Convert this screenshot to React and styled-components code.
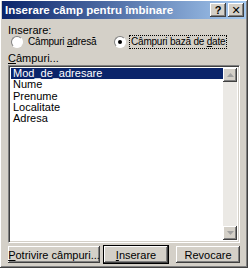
import React from "react";
import styled, { createGlobalStyle } from "styled-components";

const GlobalStyle = createGlobalStyle`
  * {
    margin: 0;
    padding: 0;
    box-sizing: border-box;
  }

  html, body {
    width: 248px;
    height: 268px;
    overflow: hidden;
    background: #d4d0c8;
  }
`;

const Dialog = styled.div`
  width: 248px;
  height: 268px;
  display: flex;
  flex-direction: column;
  background: #d4d0c8;
  box-shadow: inset -1px -1px 0 #404040, inset 1px 1px 0 #fff,
    inset -2px -2px 0 #808080;
  padding: 1px 2px 3px 2px;
  font-family: "Liberation Sans", "DejaVu Sans", sans-serif;
  font-size: 11px;
  color: #000;
`;

const TitleBar = styled.div`
  height: 18px;
  display: flex;
  align-items: center;
  justify-content: space-between;
  padding: 0 2px 0 3px;
  background: linear-gradient(90deg, #0a246a, #a6caf0);
`;

const Title = styled.span`
  color: #fff;
  font-weight: bold;
  font-size: 11.5px;
`;

const Caps = styled.div`
  display: flex;
  gap: 2px;
`;

const CapButton = styled.div`
  width: 16px;
  height: 14px;
  background: #d4d0c8;
  box-shadow: inset -1px -1px 0 #404040, inset 1px 1px 0 #fff,
    inset -2px -2px 0 #808080;
  display: flex;
  align-items: center;
  justify-content: center;
  font-weight: bold;
  font-size: 11px;
  line-height: 1;
`;

const Body = styled.div`
  flex: 1;
  display: flex;
  flex-direction: column;
  padding: 5px 6px 2px 6px;
`;

const Label = styled.div`
  height: 12px;
  line-height: 12px;
  margin-bottom: ${(p) => p.$mb || 0}px;
`;

const RadioRow = styled.div`
  display: flex;
  align-items: center;
  padding-left: 3px;
  height: 12px;
  margin-bottom: 4px;
  white-space: nowrap;
  font-size: 10px;
  letter-spacing: -0.2px;
`;

const RadioItem = styled.label`
  display: flex;
  align-items: center;
  gap: 4px;
  width: ${(p) => (p.$w ? `${p.$w}px` : "auto")};
`;

const RadioDot = styled.span`
  width: 12px;
  height: 12px;
  border-radius: 50%;
  background: #fff;
  border: 1px solid;
  border-color: #808080 #fff #fff #808080;
  display: flex;
  align-items: center;
  justify-content: center;

  &::after {
    content: "";
    width: 4px;
    height: 4px;
    border-radius: 50%;
    background: ${(p) => (p.$on ? "#000" : "transparent")};
  }
`;

const RadioText = styled.span`
  padding: 0 1px;
  line-height: 12px;
  outline: ${(p) => (p.$focus ? "1px dotted #000" : "none")};
`;

const ListBox = styled.div`
  flex: 1;
  display: flex;
  margin-top: 1px;
  background: #fff;
  border: 1px solid;
  border-color: #808080 #fff #fff #808080;
  box-shadow: inset 1px 1px 0 #404040, inset -1px -1px 0 #d4d0c8;
  padding: 2px;
`;

const Items = styled.div`
  flex: 1;
  display: flex;
  flex-direction: column;
`;

const Item = styled.div`
  height: 11.25px;
  line-height: 11px;
  padding-left: 2px;
  background: ${(p) => (p.$sel ? "#0a246a" : "transparent")};
  color: ${(p) => (p.$sel ? "#fff" : "#000")};
`;

const ScrollBar = styled.div`
  width: 14px;
  display: flex;
  flex-direction: column;
  justify-content: space-between;
  background: #ebe9e5;
`;

const Arrow = styled.div`
  width: 14px;
  height: 14px;
  background: #d4d0c8;
  box-shadow: inset -1px -1px 0 #404040, inset 1px 1px 0 #fff,
    inset -2px -2px 0 #808080;
  display: flex;
  align-items: center;
  justify-content: center;
`;

const Buttons = styled.div`
  display: flex;
  margin-top: 3px;
  height: 17px;
  gap: 4px;
  white-space: nowrap;
`;

const Button = styled.div`
  width: ${(p) => p.$w}px;
  margin-left: ${(p) => p.$ml || 0}px;
  display: flex;
  align-items: center;
  justify-content: center;
  background: #d4d0c8;
  outline: ${(p) => (p.$def ? "1px solid #000" : "none")};
  box-shadow: inset -1px -1px 0 #404040, inset 1px 1px 0 #fff,
    inset -2px -2px 0 #808080;
`;

const U = styled.u`
  text-decoration: underline;
`;

const Tri = ({ up }) => (
  <svg width="7" height="4" viewBox="0 0 7 4">
    <path d={up ? "M3.5 0 L7 4 L0 4 Z" : "M0 0 L7 0 L3.5 4 Z"} fill="#a0a0a0" />
  </svg>
);

const fields = ["Mod_de_adresare", "Nume", "Prenume", "Localitate", "Adresa"];

const App = () => (
  <>
    <GlobalStyle />
    <Dialog>
      <TitleBar>
        <Title>Inserare câmp pentru îmbinare</Title>
        <Caps>
          <CapButton>?</CapButton>
          <CapButton>✕</CapButton>
        </Caps>
      </TitleBar>
      <Body>
        <Label>Inserare:</Label>
        <RadioRow>
          <RadioItem $w={103}>
            <RadioDot />
            <RadioText>
              Câmpuri <U>a</U>dresă
            </RadioText>
          </RadioItem>
          <RadioItem>
            <RadioDot $on />
            <RadioText $focus>
              Câmpuri bază de <U>d</U>ate
            </RadioText>
          </RadioItem>
        </RadioRow>
        <Label>
          <U>C</U>âmpuri...
        </Label>
        <ListBox>
          <Items>
            {fields.map((f, i) => (
              <Item key={f} $sel={i === 0}>
                {f}
              </Item>
            ))}
          </Items>
          <ScrollBar>
            <Arrow>
              <Tri up />
            </Arrow>
            <Arrow>
              <Tri />
            </Arrow>
          </ScrollBar>
        </ListBox>
        <Buttons>
          <Button $w={92}>
            <span>
              <U>P</U>otrivire câmpuri...
            </span>
          </Button>
          <Button $w={64} $def>
            <span>
              <U>I</U>nserare
            </span>
          </Button>
          <Button $w={64} $ml={4}>
            Revocare
          </Button>
        </Buttons>
      </Body>
    </Dialog>
  </>
);

export default App;
